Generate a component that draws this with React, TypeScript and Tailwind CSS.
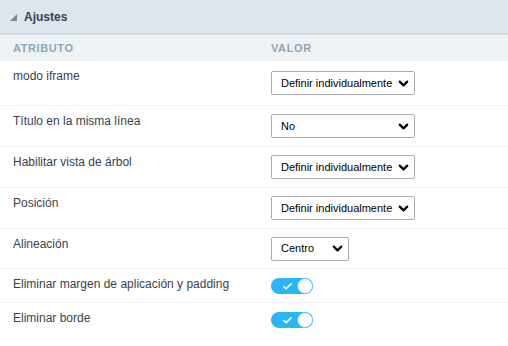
import { ChevronDown, Check } from "lucide-react";

type Row = {
  label: string;
  h: string;
  kind: "select" | "toggle";
  value?: string;
  w?: string;
};

const ROWS: Row[] = [
  { label: "modo iframe", h: "h-[45px]", kind: "select", value: "Definir individualmente", w: "w-[144px]" },
  { label: "Título en la misma línea", h: "h-[41px]", kind: "select", value: "No", w: "w-[144px]" },
  { label: "Habilitar vista de árbol", h: "h-[41px]", kind: "select", value: "Definir individualmente", w: "w-[144px]" },
  { label: "Posición", h: "h-[41px]", kind: "select", value: "Definir individualmente", w: "w-[144px]" },
  { label: "Alineación", h: "h-[40px]", kind: "select", value: "Centro", w: "w-[78px]" },
  { label: "Eliminar margen de aplicación y padding", h: "h-[34px]", kind: "toggle" },
  { label: "Eliminar borde", h: "h-[44px]", kind: "toggle" },
];

function FakeSelect({ value, w }: { value: string; w?: string }) {
  return (
    <div className={`${w} h-[24px] flex items-center justify-between border border-[#a9adb3] rounded-[2px] bg-white pl-[9px] pr-[3px]`}>
      <span className="text-[11px] text-black whitespace-nowrap">{value}</span>
      <ChevronDown className="w-[15px] h-[15px] text-black" strokeWidth={3.5} />
    </div>
  );
}

function Toggle() {
  return (
    <div className="w-[42px] h-[16px] rounded-full bg-[#2cb5f5] flex items-center justify-between pl-[11px]">
      <Check className="w-[11px] h-[11px] text-white" strokeWidth={3.5} />
      <div className="w-[16px] h-[16px] rounded-full bg-white border border-[#5cc6f7]" />
    </div>
  );
}

export default function App() {
  return (
    <div className="w-[508px] h-[346px] bg-white overflow-hidden" style={{ fontFamily: '"Liberation Sans", Arial, sans-serif' }}>
      {/* Panel header */}
      <div className="h-[35px] bg-[#dfe5ed] border-b-2 border-[#d1dde3] flex items-center pl-[10px] gap-[7px]">
        <svg width="7" height="7" viewBox="0 0 7 7" className="mt-[1px]">
          <polygon points="7,0 7,7 0,7" fill="#7d8794" />
        </svg>
        <span className="text-[12px] font-bold text-[#384052]">Ajustes</span>
      </div>

      {/* Column titles */}
      <div className="h-[26px] bg-[#eef2f5] grid grid-cols-[258px_1fr] px-[13px] items-center">
        <span className="text-[11px] font-bold tracking-[0.6px] text-[#8ea6b6]">ATRIBUTO</span>
        <span className="text-[11px] font-bold tracking-[0.6px] text-[#8ea6b6]">VALOR</span>
      </div>

      {ROWS.map((r, i) => (
        <div
          key={r.label}
          className={`${r.h} grid grid-cols-[258px_1fr] px-[13px] ${i < ROWS.length - 1 ? "border-b border-[#ebeef2]" : ""}`}
        >
          <div className="pt-[8px] text-[12px] leading-[14px] text-[#3a3f4e]">{r.label}</div>
          <div className={`flex ${r.kind === "toggle" ? "items-start pt-[9px]" : "items-center"}`}>
            {r.kind === "select" ? <FakeSelect value={r.value!} w={r.w} /> : <Toggle />}
          </div>
        </div>
      ))}
    </div>
  );
}
